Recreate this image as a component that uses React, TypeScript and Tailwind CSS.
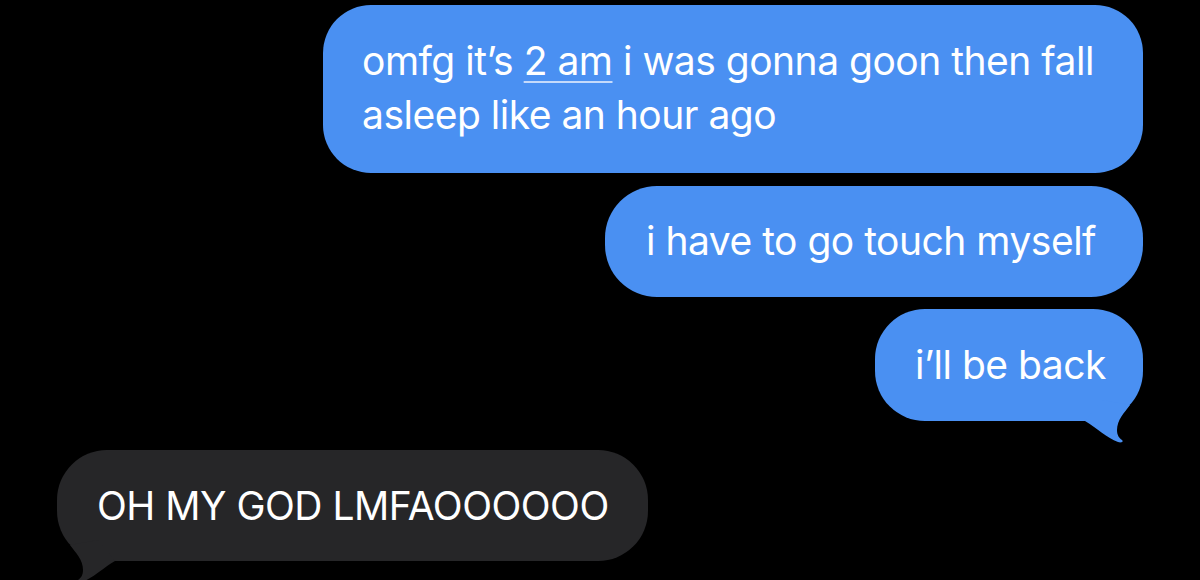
import React from "react";

function BlueTail() {
  return (
    <svg
      className="absolute left-[200px] top-[80px] h-[60px] w-[60px]"
      viewBox="0 0 60 60"
    >
      <path
        d="M55 16 C49 24 42 31 42 41 C42 46 44 49 47 51 C49 53 46 54 43 53 C32 49 22 39 10 32 L27 11 Z"
        fill="#4a90f2"
      />
    </svg>
  );
}

function GrayTail() {
  return (
    <svg
      className="absolute left-[8px] top-[79px] h-[60px] w-[60px] -scale-x-100"
      viewBox="0 0 60 60"
    >
      <path
        d="M55 16 C49 24 42 31 42 41 C42 46 44 49 47 51 C49 53 46 54 43 53 C32 49 22 39 10 32 L27 11 Z"
        fill="#262628"
      />
    </svg>
  );
}

export default function App() {
  return (
    <div
      className="flex h-[580px] w-[1200px] flex-col overflow-hidden bg-black px-[57px] pt-[5px] text-white"
      style={{ fontFamily: "Inter, 'Liberation Sans', sans-serif" }}
    >
      <div className="flex flex-col items-end">
        <div className="flex h-[168px] w-[820px] flex-col justify-center rounded-[48px] bg-[#4a90f2] pb-[2px] pl-[39px] text-[39px] leading-[54px] tracking-[-0.5px]">
          <div>
            omfg it’s{" "}
            <span className="underline decoration-[#c5dafb] decoration-[2px] underline-offset-[6px]">
              2 am
            </span>{" "}
            i was gonna goon then fall
          </div>
          <div>asleep like an hour ago</div>
        </div>

        <div className="mt-[13px] flex h-[111px] w-[538px] items-center rounded-[52px] bg-[#4a90f2] pl-[41px] text-[39px] tracking-[-0.5px]">
          i have to go touch myself
        </div>

        <div className="relative mt-[12px] flex h-[112px] w-[268px] items-center rounded-[50px] bg-[#4a90f2] pl-[40px] text-[39px] tracking-[-0.5px]">
          i’ll be back
          <BlueTail />
        </div>
      </div>

      <div className="mt-[29px] flex">
        <div className="relative flex h-[111px] w-[591px] items-center rounded-[50px] bg-[#262628] pl-[40px] pt-[2px] text-[39px] tracking-[-0.5px]">
          OH MY GOD LMFAOOOOOO
          <GrayTail />
        </div>
      </div>
    </div>
  );
}
